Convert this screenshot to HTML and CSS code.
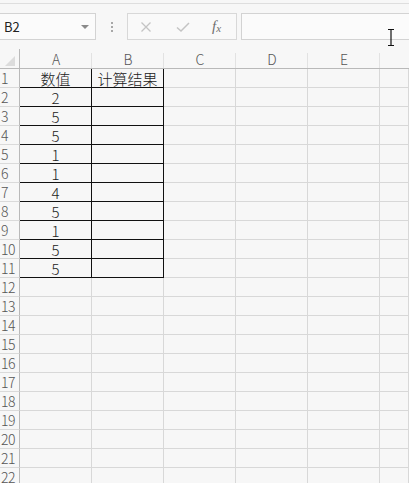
FILE: index.html
```html
<!DOCTYPE html>
<html lang="zh">
<head>
<meta charset="utf-8">
<title>Sheet</title>
<link rel="stylesheet" href="styles.css">
</head>
<body>
<div class="app">
  <div class="toolbar">
    <div class="namebox">
      <span class="ref">B2</span>
      <span class="caret"></span>
    </div>
    <div class="dots"><i></i><i></i><i></i></div>
    <div class="btns">
      <svg class="ico" width="12" height="12" viewBox="0 0 12 12"><path d="M1.5 1.5 L10.5 10.5 M10.5 1.5 L1.5 10.5" stroke="#c4c4c4" stroke-width="1.3" fill="none"/></svg>
      <svg class="ico" width="14" height="12" viewBox="0 0 14 12"><path d="M1 6.5 L5 10 L13 2" stroke="#c4c4c4" stroke-width="1.5" fill="none"/></svg>
      <span class="fx">f<sub>x</sub></span>
    </div>
    <div class="formula"></div>
    <svg class="ibeam" width="8" height="17" viewBox="0 0 8 17"><path d="M1 0.5 H7 M4 0.5 V16.5 M1 16.5 H7" stroke="#111" stroke-width="1.2" fill="none"/></svg>
  </div>
  <div class="sheet">
    <div class="ch corner"><span class="tri"></span></div>
    <div class="ch">A</div><div class="ch">B</div><div class="ch">C</div><div class="ch">D</div><div class="ch">E</div><div class="ch last"></div>

    <div class="rh">1</div><div class="c b">数值</div><div class="c b">计算结果</div><div class="c"></div><div class="c"></div><div class="c"></div><div class="c"></div>
    <div class="rh">2</div><div class="c b">2</div><div class="c b"></div><div class="c"></div><div class="c"></div><div class="c"></div><div class="c"></div>
    <div class="rh">3</div><div class="c b">5</div><div class="c b"></div><div class="c"></div><div class="c"></div><div class="c"></div><div class="c"></div>
    <div class="rh">4</div><div class="c b">5</div><div class="c b"></div><div class="c"></div><div class="c"></div><div class="c"></div><div class="c"></div>
    <div class="rh">5</div><div class="c b">1</div><div class="c b"></div><div class="c"></div><div class="c"></div><div class="c"></div><div class="c"></div>
    <div class="rh">6</div><div class="c b">1</div><div class="c b"></div><div class="c"></div><div class="c"></div><div class="c"></div><div class="c"></div>
    <div class="rh">7</div><div class="c b">4</div><div class="c b"></div><div class="c"></div><div class="c"></div><div class="c"></div><div class="c"></div>
    <div class="rh">8</div><div class="c b">5</div><div class="c b"></div><div class="c"></div><div class="c"></div><div class="c"></div><div class="c"></div>
    <div class="rh">9</div><div class="c b">1</div><div class="c b"></div><div class="c"></div><div class="c"></div><div class="c"></div><div class="c"></div>
    <div class="rh">10</div><div class="c b">5</div><div class="c b"></div><div class="c"></div><div class="c"></div><div class="c"></div><div class="c"></div>
    <div class="rh">11</div><div class="c b">5</div><div class="c b"></div><div class="c"></div><div class="c"></div><div class="c"></div><div class="c"></div>
    <div class="rh">12</div><div class="c"></div><div class="c"></div><div class="c"></div><div class="c"></div><div class="c"></div><div class="c"></div>
    <div class="rh">13</div><div class="c"></div><div class="c"></div><div class="c"></div><div class="c"></div><div class="c"></div><div class="c"></div>
    <div class="rh">14</div><div class="c"></div><div class="c"></div><div class="c"></div><div class="c"></div><div class="c"></div><div class="c"></div>
    <div class="rh">15</div><div class="c"></div><div class="c"></div><div class="c"></div><div class="c"></div><div class="c"></div><div class="c"></div>
    <div class="rh">16</div><div class="c"></div><div class="c"></div><div class="c"></div><div class="c"></div><div class="c"></div><div class="c"></div>
    <div class="rh">17</div><div class="c"></div><div class="c"></div><div class="c"></div><div class="c"></div><div class="c"></div><div class="c"></div>
    <div class="rh">18</div><div class="c"></div><div class="c"></div><div class="c"></div><div class="c"></div><div class="c"></div><div class="c"></div>
    <div class="rh">19</div><div class="c"></div><div class="c"></div><div class="c"></div><div class="c"></div><div class="c"></div><div class="c"></div>
    <div class="rh">20</div><div class="c"></div><div class="c"></div><div class="c"></div><div class="c"></div><div class="c"></div><div class="c"></div>
    <div class="rh">21</div><div class="c"></div><div class="c"></div><div class="c"></div><div class="c"></div><div class="c"></div><div class="c"></div>
    <div class="rh">22</div><div class="c"></div><div class="c"></div><div class="c"></div><div class="c"></div><div class="c"></div><div class="c"></div>
  </div>
</div>
</body>
</html>
```
FILE: styles.css
```css
* { box-sizing: border-box; }
html, body { margin: 0; padding: 0; }
body {
  width: 409px;
  height: 483px;
  overflow: hidden;
  background: #f7f7f7;
  font-family: "Noto Sans CJK SC", "Noto Sans", sans-serif;
  color: #222;
}
.app { position: relative; }
.toolbar {
  position: relative;
  height: 50px;
  margin-top: 3px;
  border-top: 1px solid #dedede;
  padding-top: 9px;
  display: flex;
  align-items: flex-start;
}
.namebox {
  width: 97px;
  height: 27px;
  margin-left: -1px;
  border: 1px solid #d3d3d3;
  background: #fbfbfb;
  display: flex;
  align-items: center;
  justify-content: space-between;
  padding: 0 6px 0 4px;
}
.ref { font-size: 13px; color: #222; line-height: 1; }
.caret {
  width: 0; height: 0;
  border-left: 4px solid transparent;
  border-right: 4px solid transparent;
  border-top: 4px solid #8a8a8a;
}
.dots {
  width: 31px;
  height: 27px;
  display: flex;
  flex-direction: column;
  align-items: center;
  justify-content: center;
  gap: 2px;
}
.dots i { width: 2px; height: 2px; background: #a8a8a8; display: block; }
.btns {
  width: 110px;
  height: 27px;
  border: 1px solid #d8d8d8;
  background: #f9f9f9;
  display: flex;
  align-items: center;
  padding-left: 12px;
  gap: 24px;
}
.fx {
  font-family: "Liberation Serif", "DejaVu Serif", serif;
  font-style: italic;
  font-size: 15px;
  color: #6f6f6f;
  line-height: 1;
  margin-left: -2px;
}
.fx sub { font-size: 11px; vertical-align: -1px; }
.formula {
  flex: 1;
  height: 27px;
  margin-left: 4px;
  margin-right: -2px;
  border: 1px solid #d3d3d3;
  background: #fbfbfb;
}
.ibeam { position: absolute; left: 387px; top: 25px; }

.sheet {
  display: grid;
  grid-template-columns: 20px repeat(5, 72px) 1fr;
  grid-template-rows: 20px;
  grid-auto-rows: 19px;
  margin-top: -4px;
}
.ch {
  position: relative;
  height: 20px;
  border-bottom: 1px solid #b9b9b9;
  font-size: 14px;
  font-weight: 300;
  color: #555;
  text-align: center;
  line-height: 18px;
  padding-top: 1px;
}
.ch::after {
  content: "";
  position: absolute;
  right: 0; top: 4px; bottom: 0;
  width: 1px;
  background: #e2e2e2;
}
.ch.last::after, .ch.corner::after { display: none; }
.ch.corner { border-right: 1px solid #b9b9b9; }
.tri {
  position: absolute;
  left: 5px; top: 7px;
  width: 0; height: 0;
  border-left: 10px solid transparent;
  border-bottom: 10px solid #dcdcdc;
}
.rh {
  border-right: 1px solid #b9b9b9;
  border-bottom: 1px solid #dadada;
  font-size: 14px;
  font-weight: 300;
  color: #555;
  line-height: 18px;
  padding-left: 1px;
  letter-spacing: -0.5px;
  white-space: nowrap;
}
.c {
  border-right: 1px solid #d8d8d8;
  border-bottom: 1px solid #d8d8d8;
  font-size: 15px;
  font-weight: 300;
  line-height: 17px;
  padding-top: 1px;
  text-align: center;
  color: #222;
  white-space: nowrap;
}
.c.b { border-right-color: #111; border-bottom-color: #111; }
```
